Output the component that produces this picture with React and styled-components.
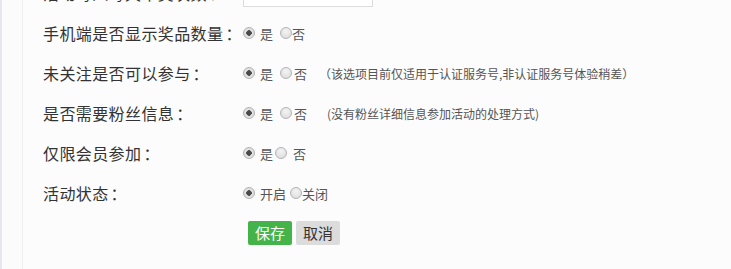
import React from 'react';
import styled, { createGlobalStyle } from 'styled-components';

const GlobalStyle = createGlobalStyle`
    html, body {
        margin: 0;
        padding: 0;
        background: #fbfbfb;
        font-family: "Noto Sans CJK SC", "Noto Sans", sans-serif;
        overflow: hidden;
    }
`;

const Page = styled.div`
    height: 269px;
    border-left: 2px solid #e6e6ee;
    padding-left: 20px;
    box-sizing: border-box;
`;

const Panel = styled.div`
    height: 100%;
    border-left: 1px solid #f0f0f0;
    background: #fcfcfc;
    padding-left: 20px;
    overflow: hidden;
`;

const Row = styled.div`
    display: flex;
    align-items: center;
    height: 40px;
    margin-top: ${p => p.$mt || 0}px;
`;

const Label = styled.div`
    width: 200px;
    flex-shrink: 0;
    white-space: nowrap;
    font-size: 16px;
    color: #333;
    letter-spacing: 0.4px;
`;

const Colon = styled.span`
    margin-left: 2px;
`;

const Controls = styled.div`
    display: flex;
    align-items: center;
    white-space: nowrap;
`;

const TextInput = styled.div`
    width: 128px;
    height: 26px;
    border: 1px solid #ddd;
    background: #fff;
`;

const Radio = styled.span`
    display: inline-block;
    width: 12px;
    height: 12px;
    border-radius: 50%;
    box-sizing: border-box;
    border: 1px solid #b4b4b4;
    margin-left: ${p => p.$ml || 0}px;
    background: ${p => p.$checked
        ? 'radial-gradient(circle, #4a4a4a 0 2.5px, #e4e4e4 3px, #d6d6d6 100%)'
        : 'radial-gradient(circle at 50% 35%, #f4f4f4 0, #d8d8d8 100%)'};
`;

const OptText = styled.span`
    font-size: 13px;
    color: #555;
    margin-left: ${p => p.$ml || 0}px;
`;

const Note = styled.span`
    font-size: 12px;
    color: #555;
    margin-left: ${p => p.$ml || 0}px;
`;

const Button = styled.button`
    height: 24px;
    width: 44px;
    padding: 0;
    border: none;
    border-radius: 2px;
    font-family: inherit;
    font-size: 15px;
    line-height: 24px;
    margin-left: ${p => p.$ml || 0}px;
    background: ${p => p.$primary ? '#44b349' : '#dcdcdc'};
    color: ${p => p.$primary ? '#fff' : '#333'};
`;

const App = () => {
    return (
        <>
            <GlobalStyle />
            <Page>
                <Panel>
                    <Row $mt={-27}>
                        <Label>活动每人每天中奖次数<Colon>：</Colon></Label>
                        <TextInput />
                    </Row>
                    <Row>
                        <Label>手机端是否显示奖品数量<Colon>：</Colon></Label>
                        <Controls>
                            <Radio $checked />
                            <OptText $ml={5}>是</OptText>
                            <Radio $ml={7} />
                            <OptText>否</OptText>
                        </Controls>
                    </Row>
                    <Row>
                        <Label>未关注是否可以参与<Colon>：</Colon></Label>
                        <Controls>
                            <Radio $checked />
                            <OptText $ml={5}>是</OptText>
                            <Radio $ml={7} />
                            <OptText $ml={2}>否</OptText>
                            <Note $ml={12}>（该选项目前仅适用于认证服务号,非认证服务号体验稍差）</Note>
                        </Controls>
                    </Row>
                    <Row>
                        <Label>是否需要粉丝信息<Colon>：</Colon></Label>
                        <Controls>
                            <Radio $checked />
                            <OptText $ml={5}>是</OptText>
                            <Radio $ml={7} />
                            <OptText $ml={2}>否</OptText>
                            <Note $ml={20}>(没有粉丝详细信息参加活动的处理方式)</Note>
                        </Controls>
                    </Row>
                    <Row>
                        <Label>仅限会员参加<Colon>：</Colon></Label>
                        <Controls>
                            <Radio $checked />
                            <OptText $ml={5}>是</OptText>
                            <Radio $ml={2} />
                            <OptText $ml={6}>否</OptText>
                        </Controls>
                    </Row>
                    <Row>
                        <Label>活动状态<Colon>：</Colon></Label>
                        <Controls>
                            <Radio $checked />
                            <OptText $ml={5}>开启</OptText>
                            <Radio $ml={4} />
                            <OptText>关闭</OptText>
                        </Controls>
                    </Row>
                    <Row>
                        <Label />
                        <Controls>
                            <Button $primary $ml={5}>保存</Button>
                            <Button $ml={4}>取消</Button>
                        </Controls>
                    </Row>
                </Panel>
            </Page>
        </>
    );
};

export default App;
